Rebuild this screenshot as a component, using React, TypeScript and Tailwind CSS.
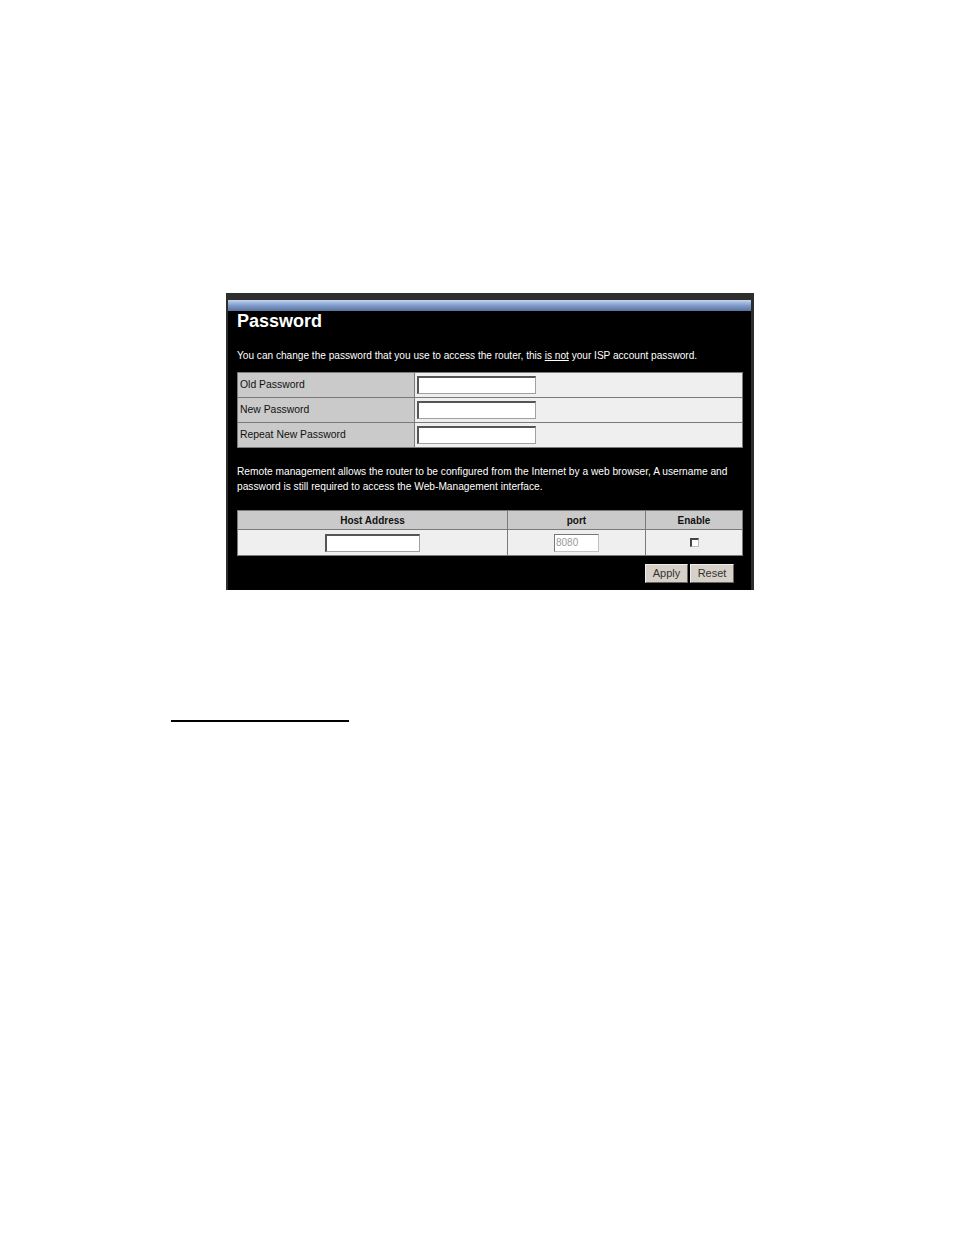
import React from 'react';

const font = { fontFamily: '"Liberation Sans", Arial, sans-serif' };

const PasswordRow = ({ label }: { label: string }) => (
  <tr className="h-[25px]">
    <td className="w-[177px] bg-[#cacaca] border border-[#7a7a7a] pl-[2px] text-[10.4px] text-[#111]">{label}</td>
    <td className="bg-[#efefef] border border-[#7a7a7a] pl-[2px]">
      <input
        type="password"
        className="block w-[119px] h-[18px] bg-white border border-[#a0a0a0] border-t-[#555] border-l-[#555] border-t-2 border-l-2"
      />
    </td>
  </tr>
);

const App: React.FC = () => {
  return (
    <div className="min-h-[1235px] bg-white pt-[293px]" style={font}>
      <div className="ml-[226px] w-[528px] h-[297px] bg-black border-l-2 border-r-[3px] border-t-[7px] border-[#2e2e2e]">
        <div className="h-[11px] bg-gradient-to-b from-[#c4d6ee] via-[#7f9ccc] to-[#5b729a]" />
        <div className="pl-[9px] pr-[9px]">
          <h1 className="text-[18px] font-bold text-white leading-none mt-[1px]">Password</h1>
          <p className="text-[10.1px] text-white mt-[21px] leading-none">
            You can change the password that you use to access the router, this <u>is not</u> your ISP account password.
          </p>

          <table className="w-[506px] mt-[11px] border-collapse">
            <tbody>
              <PasswordRow label="Old Password" />
              <PasswordRow label="New Password" />
              <PasswordRow label="Repeat New Password" />
            </tbody>
          </table>

          <p className="text-[10.2px] text-white mt-[16px] leading-[15px]">
            Remote management allows the router to be configured from the Internet by a web browser, A username and
            password is still required to access the Web-Management interface.
          </p>

          <table className="w-[506px] mt-[16px] border-collapse text-[10px] text-[#111]">
            <thead>
              <tr className="h-[19px] bg-[#cacaca]">
                <th className="w-[270px] border border-[#7a7a7a] font-bold">Host Address</th>
                <th className="w-[138px] border border-[#7a7a7a] font-bold">port</th>
                <th className="border border-[#7a7a7a] font-bold">Enable</th>
              </tr>
            </thead>
            <tbody>
              <tr className="h-[26px] bg-[#efefef]">
                <td className="border border-[#7a7a7a]">
                  <input
                    type="text"
                    className="block mx-auto w-[95px] h-[18px] bg-white border border-[#a0a0a0] border-t-[#555] border-l-[#555] border-t-2 border-l-2"
                  />
                </td>
                <td className="border border-[#7a7a7a]">
                  <input
                    type="text"
                    defaultValue="8080"
                    disabled
                    className="block mx-auto w-[45px] h-[18px] bg-white text-[10px] text-[#999] pl-px border border-[#c0c0c0] border-t-[#777] border-l-[#777]"
                  />
                </td>
                <td className="border border-[#7a7a7a]">
                  <div className="mx-auto w-[9px] h-[9px] bg-white border-t-2 border-l-2 border-[#444] border-r border-b border-r-[#bbb] border-b-[#bbb]" />
                </td>
              </tr>
            </tbody>
          </table>

          <div className="flex justify-end gap-[2px] mt-[8px] pr-[8px]">
            <button className="w-[43px] h-[19px] bg-[#d6d0c8] text-[11px] text-[#333] border border-[#eee] border-r-[#666] border-b-[#666]">Apply</button>
            <button className="w-[44px] h-[19px] bg-[#d6d0c8] text-[11px] text-[#333] border border-[#eee] border-r-[#666] border-b-[#666]">Reset</button>
          </div>
        </div>
      </div>

      <div className="ml-[171px] mt-[130px] w-[178px] h-[2px] bg-black" />
    </div>
  );
};

export default App;
